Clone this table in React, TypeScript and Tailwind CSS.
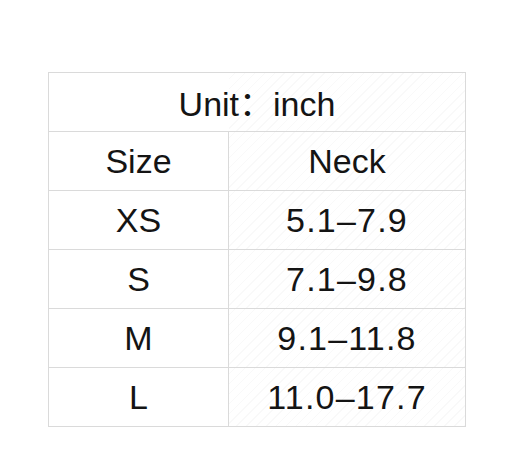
const rows = [
  { size: 'XS', neck: '5.1–7.9' },
  { size: 'S', neck: '7.1–9.8' },
  { size: 'M', neck: '9.1–11.8' },
  { size: 'L', neck: '11.0–17.7' },
];

const hatch =
  'bg-[repeating-linear-gradient(-45deg,rgba(0,0,0,0.025)_0px,rgba(0,0,0,0.025)_1px,transparent_1px,transparent_7px)]';

export default function App() {
  return (
    <div
      className="min-h-[474px] w-[514px] bg-white pl-[48px] pt-[72px] text-[34px] text-[#141414]"
      style={{ fontFamily: '"Liberation Sans", "Noto Sans CJK SC", sans-serif' }}
    >
      <div className="w-[418px] border-l border-r border-b border-[#dadada]">
        <div className="relative flex h-[59px] items-center justify-center border-t border-[#dadada] pt-[3px]">
          <div className={`absolute inset-y-0 left-[180px] right-0 ${hatch}`} />
          <span className="relative leading-none">Unit：inch</span>
        </div>
        <div className="flex h-[59px] border-t border-[#dadada]">
          <div className="flex w-[180px] items-center justify-center border-r border-[#dadada]">
            Size
          </div>
          <div className={`flex flex-1 items-center justify-center ${hatch}`}>Neck</div>
        </div>
        {rows.map((r) => (
          <div key={r.size} className="flex h-[59px] border-t border-[#dadada]">
            <div className="flex w-[180px] items-center justify-center border-r border-[#dadada]">
              {r.size}
            </div>
            <div className={`flex flex-1 items-center justify-center tracking-[1.2px] ${hatch}`}>
              {r.neck}
            </div>
          </div>
        ))}
      </div>
    </div>
  );
}
